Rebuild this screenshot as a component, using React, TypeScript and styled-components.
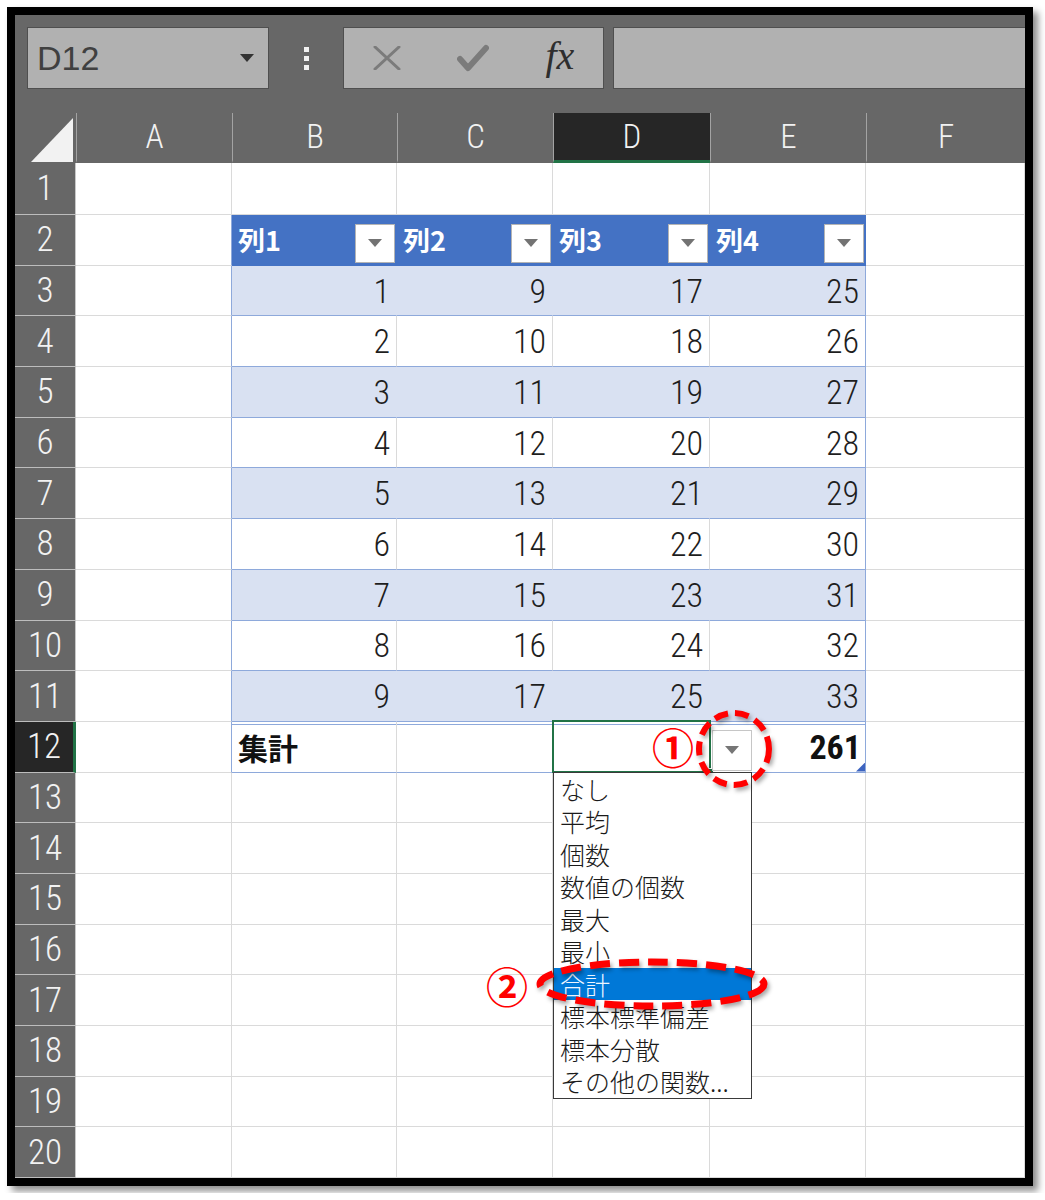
import React from 'react';
import styled, { createGlobalStyle } from 'styled-components';

const JP = `'Noto Sans CJK JP', sans-serif`;
const NUM = `'Roboto Condensed', 'Liberation Sans Narrow', 'Liberation Sans', sans-serif`;

const columns = ['A', 'B', 'C', 'D', 'E', 'F'];
const headers = ['列1', '列2', '列3', '列4'];
const functions = ['なし', '平均', '個数', '数値の個数', '最大', '最小', '合計', '標本標準偏差', '標本分散', 'その他の関数...'];

type Kind = 'plain' | 'head' | 'band' | 'body' | 'total';

const kinds: Record<Kind, { bg: string; right: string; bottom: string }> = {
  plain: { bg: '#ffffff', right: '#dadada', bottom: '#dadada' },
  head: { bg: '#4472c4', right: '#4472c4', bottom: '#4472c4' },
  band: { bg: '#d9e1f2', right: '#d9e1f2', bottom: '#8ea9db' },
  body: { bg: '#ffffff', right: '#dadada', bottom: '#8ea9db' },
  total: { bg: '#ffffff', right: '#dadada', bottom: '#8ea9db' },
};

const GlobalStyle = createGlobalStyle`
  html, body {
    margin: 0;
    padding: 0;
    background: #ffffff;
  }
  body {
    font-family: ${JP};
  }
`;

const Page = styled.div`
  padding: 7px;
  width: 1045px;
  box-sizing: border-box;
`;

const Frame = styled.div`
  width: 1010px;
  height: 1163px;
  border: 8px solid #000;
  box-shadow: 5px 5px 7px rgba(0, 0, 0, 0.45);
  background: #ffffff;
  overflow: hidden;
  display: flex;
  flex-direction: column;
`;

const Toolbar = styled.div`
  flex: none;
  height: 98px;
  box-sizing: border-box;
  padding: 12px 0 0 12px;
  background: #676767;
  display: flex;
  align-items: flex-start;
`;

const NameBox = styled.div`
  width: 242px;
  height: 62px;
  box-sizing: border-box;
  padding: 0 14px 0 9px;
  background: #b1b1b1;
  border: 1px solid #4f4f4f;
  display: flex;
  align-items: center;
  justify-content: space-between;
  font-family: 'Liberation Sans', sans-serif;
  font-size: 34px;
  color: #404040;
`;

const Caret = styled.span<{ $color: string }>`
  width: 0;
  height: 0;
  border-left: 7px solid transparent;
  border-right: 7px solid transparent;
  border-top: 8px solid ${p => p.$color};
`;

const Grip = styled.div`
  width: 74px;
  height: 62px;
  display: flex;
  flex-direction: column;
  align-items: center;
  justify-content: center;
  gap: 4px;
`;

const GripDot = styled.span`
  width: 5px;
  height: 5px;
  background: #f2f2f2;
`;

const FxBox = styled.div`
  width: 261px;
  height: 62px;
  box-sizing: border-box;
  background: #b1b1b1;
  border: 1px solid #4f4f4f;
  display: flex;
`;

const FxSlot = styled.div`
  flex: 1;
  display: flex;
  align-items: center;
  justify-content: center;
`;

const FxLabel = styled.span`
  font-family: 'Liberation Serif', serif;
  font-style: italic;
  font-size: 40px;
  color: #2e2e2e;
  line-height: 1;
  margin-top: -4px;
`;

const FormulaInput = styled.div`
  flex: 1;
  margin-left: 9px;
  height: 62px;
  box-sizing: border-box;
  background: #b1b1b1;
  border: 1px solid #4f4f4f;
  border-right: none;
`;

const Sheet = styled.div`
  display: grid;
  grid-template-columns: 61px 156px 165px 156px 157px 156px 159px;
  grid-template-rows: 50px 52px repeat(19, 50.7px);
`;

const Corner = styled.div`
  background: #676767;
  display: flex;
  align-items: flex-end;
  justify-content: flex-end;
  padding: 0 3px 1px 0;
`;

const CornerTriangle = styled.div`
  width: 42px;
  height: 44px;
  background: #f2f2f2;
  clip-path: polygon(100% 0, 100% 100%, 0 100%);
`;

const ColHeader = styled.div<{ $active?: boolean }>`
  box-sizing: border-box;
  background: ${p => (p.$active ? '#262626' : '#676767')};
  border-left: 1px solid #a3a3a3;
  border-bottom: 3px solid ${p => (p.$active ? '#217346' : '#676767')};
  display: flex;
  align-items: center;
  justify-content: center;
  font-family: ${NUM};
  font-weight: 300;
  font-size: 33px;
  color: #f2f2f2;
`;

const RowHeader = styled.div<{ $active?: boolean }>`
  box-sizing: border-box;
  background: ${p => (p.$active ? '#262626' : '#676767')};
  border-bottom: 1px solid #bdbdbd;
  border-right: ${p => (p.$active ? '3px solid #217346' : '1px solid #c8c8c8')};
  display: flex;
  align-items: center;
  justify-content: center;
  font-family: ${NUM};
  font-weight: 300;
  font-size: 35px;
  color: #f2f2f2;
  line-height: 1;
`;

const Cell = styled.div<{ $kind: Kind; $edge?: boolean; $align?: 'left' | 'right' }>`
  position: relative;
  box-sizing: border-box;
  min-width: 0;
  display: flex;
  align-items: center;
  justify-content: ${p => (p.$align === 'left' ? 'flex-start' : 'flex-end')};
  padding: 0 6px 0 6px;
  background: ${p => kinds[p.$kind].bg};
  border-right: 1px solid ${p => (p.$edge ? '#8ea9db' : kinds[p.$kind].right)};
  border-bottom: 1px solid ${p => kinds[p.$kind].bottom};
  ${p => (p.$kind === 'total' ? 'box-shadow: inset 0 2px 0 #ffffff, inset 0 3px 0 #8ea9db;' : '')}
  font-family: ${NUM};
  font-weight: 300;
  font-size: 34px;
  line-height: 1;
  color: #1e1e1e;
`;

const HeadCell = styled(Cell)`
  padding: 0 1px 0 6px;
  justify-content: space-between;
`;

const HeadLabel = styled.span`
  font-family: ${JP};
  font-weight: bold;
  font-size: 27px;
  color: #ffffff;
`;

const FilterButton = styled.span`
  align-self: flex-end;
  margin-bottom: 2px;
  width: 40px;
  height: 39px;
  box-sizing: border-box;
  background: #ffffff;
  border: 1px solid #b4b4b4;
  display: flex;
  align-items: center;
  justify-content: center;
`;

const TotalLabel = styled.span`
  font-family: ${JP};
  font-weight: bold;
  font-size: 30px;
  color: #111;
`;

const TotalValue = styled.span`
  font-weight: bold;
  color: #111;
  margin-right: -2px;
`;

const ResizeMark = styled.span`
  position: absolute;
  right: 0;
  bottom: 0;
  width: 9px;
  height: 9px;
  background: #3d64c0;
  clip-path: polygon(100% 0, 100% 100%, 0 100%);
`;

const SelectedCell = styled(Cell)`
  z-index: 5;

  &::after {
    content: '';
    position: absolute;
    left: -1px;
    top: -2px;
    right: -2px;
    bottom: -1px;
    border: 2px solid #217346;
    pointer-events: none;
  }
`;

const FillHandle = styled.span`
  position: absolute;
  right: -5px;
  bottom: -5px;
  width: 7px;
  height: 7px;
  background: #217346;
  border: 1px solid #ffffff;
  z-index: 1;
`;

const TotalDropButton = styled.span`
  position: absolute;
  left: 159px;
  top: 8px;
  width: 40px;
  height: 41px;
  box-sizing: border-box;
  background: #ffffff;
  border: 1px solid #c6c6c6;
  display: flex;
  align-items: center;
  justify-content: center;
  z-index: 2;
`;

const FunctionList = styled.ul`
  position: absolute;
  left: 0;
  top: 50px;
  width: 199px;
  margin: 0;
  padding: 0;
  list-style: none;
  box-sizing: border-box;
  background: #ffffff;
  border: 1px solid #3a3a3a;
  z-index: 3;
`;

const FunctionItem = styled.li<{ $selected?: boolean }>`
  height: 32.5px;
  line-height: 32.5px;
  padding-left: 6px;
  white-space: nowrap;
  font-family: ${JP};
  font-size: 25px;
  color: ${p => (p.$selected ? '#eef5ff' : '#1a1a1a')};
  background: ${p => (p.$selected ? '#0078d7' : 'transparent')};
`;

const Marker = styled.span<{ $x: number; $y: number }>`
  position: absolute;
  left: ${p => p.$x}px;
  top: ${p => p.$y}px;
  font-family: ${JP};
  font-weight: bold;
  font-size: 42px;
  line-height: 42px;
  color: #ff0000;
  z-index: 4;
`;

const Callout = styled.svg<{ $x: number; $y: number }>`
  position: absolute;
  left: ${p => p.$x}px;
  top: ${p => p.$y}px;
  overflow: visible;
  filter: drop-shadow(2px 3px 2px rgba(0, 0, 0, 0.35));
  z-index: 4;
  pointer-events: none;
`;

const values = (row: number) => [row - 2, row + 6, row + 14, row + 22];

const renderRow = (row: number) => {
  if (row === 2) {
    return [
      <Cell key="A" $kind="plain" $edge />,
      ...headers.map(h => (
        <HeadCell key={h} $kind="head">
          <HeadLabel>{h}</HeadLabel>
          <FilterButton>
            <Caret $color="#737373" />
          </FilterButton>
        </HeadCell>
      )),
      <Cell key="F" $kind="plain" />,
    ];
  }
  if (row >= 3 && row <= 11) {
    const kind: Kind = row % 2 === 1 ? 'band' : 'body';
    return [
      <Cell key="A" $kind="plain" $edge />,
      ...values(row).map((v, i) => (
        <Cell key={i} $kind={kind} $edge={i === 3}>
          {v}
        </Cell>
      )),
      <Cell key="F" $kind="plain" />,
    ];
  }
  if (row === 12) {
    return [
      <Cell key="A" $kind="plain" $edge />,
      <Cell key="B" $kind="total" $align="left">
        <TotalLabel>集計</TotalLabel>
      </Cell>,
      <Cell key="C" $kind="total" />,
      <SelectedCell key="D" $kind="total">
        <FillHandle />
        <TotalDropButton>
          <Caret $color="#767676" />
        </TotalDropButton>
        <FunctionList>
          {functions.map(f => (
            <FunctionItem key={f} $selected={f === '合計'}>
              {f}
            </FunctionItem>
          ))}
        </FunctionList>
        <Marker $x={99} $y={3}>①</Marker>
        <Callout $x={136} $y={-18} width="90" height="90" viewBox="0 0 90 90">
          <ellipse cx="45" cy="45" rx="35" ry="36" fill="none" stroke="#ff0000" strokeWidth="6" strokeDasharray="14 7" />
        </Callout>
        <Marker $x={-67} $y={242}>②</Marker>
        <Callout $x={-26} $y={227} width="250" height="70" viewBox="0 0 250 70">
          <ellipse cx="125" cy="35" rx="112" ry="22" fill="none" stroke="#ff0000" strokeWidth="7" strokeDasharray="20 9" />
        </Callout>
      </SelectedCell>,
      <Cell key="E" $kind="total" $edge>
        <TotalValue>261</TotalValue>
        <ResizeMark />
      </Cell>,
      <Cell key="F" $kind="plain" />,
    ];
  }
  return columns.map(c => <Cell key={c} $kind="plain" />);
};

const App: React.FC = () => {
  return (
    <Page>
      <GlobalStyle />
      <Frame>
        <Toolbar>
          <NameBox>
            D12
            <Caret $color="#333333" />
          </NameBox>
          <Grip>
            <GripDot />
            <GripDot />
            <GripDot />
          </Grip>
          <FxBox>
            <FxSlot>
              <svg width="28" height="24" viewBox="0 0 28 24">
                <path d="M2 1 L26 23 M26 1 L2 23" stroke="#7b7b7b" strokeWidth="3" strokeLinecap="round" fill="none" />
              </svg>
            </FxSlot>
            <FxSlot>
              <svg width="32" height="28" viewBox="0 0 32 28">
                <path d="M3 15 L11 24 L29 4" stroke="#7b7b7b" strokeWidth="6" strokeLinecap="round" strokeLinejoin="round" fill="none" />
              </svg>
            </FxSlot>
            <FxSlot>
              <FxLabel>fx</FxLabel>
            </FxSlot>
          </FxBox>
          <FormulaInput />
        </Toolbar>
        <Sheet>
          <Corner>
            <CornerTriangle />
          </Corner>
          {columns.map(c => (
            <ColHeader key={c} $active={c === 'D'}>
              {c}
            </ColHeader>
          ))}
          {Array.from({ length: 20 }, (_, i) => {
            const row = i + 1;
            return (
              <React.Fragment key={row}>
                <RowHeader $active={row === 12}>{row}</RowHeader>
                {renderRow(row)}
              </React.Fragment>
            );
          })}
        </Sheet>
      </Frame>
    </Page>
  );
};

export default App;
